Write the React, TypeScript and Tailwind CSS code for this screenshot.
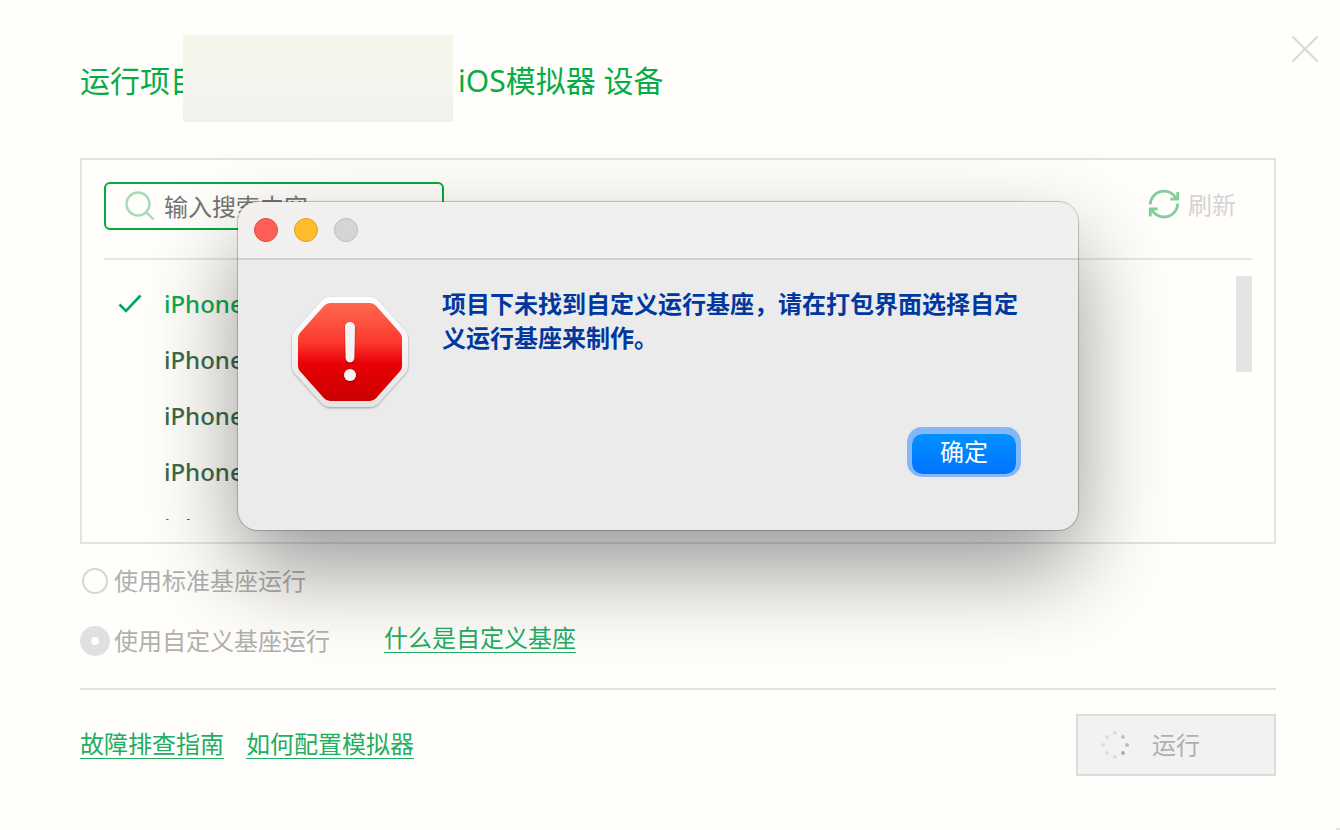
const devices = ["iPhone 8", "iPhone 8 Plus", "iPhone 11", "iPhone 11 Pro", "iPhone 12"];

const spinnerDots = [
  { cx: 15, cy: 3, fill: "#dcdcdc" },
  { cx: 23, cy: 7, fill: "#c3c3c3" },
  { cx: 27, cy: 15, fill: "#bdbdbd" },
  { cx: 23, cy: 23, fill: "#b0b0b0" },
  { cx: 15, cy: 27, fill: "#dcdcdc" },
  { cx: 7, cy: 23, fill: "#dedede" },
  { cx: 3, cy: 15, fill: "#dedede" },
  { cx: 7, cy: 7, fill: "#dedede" },
];

function Header() {
  return (
    <header className="flex items-start justify-between pt-[35px] pl-20 pr-[22px]">
      <h1 className="flex items-center text-[30px] leading-9 text-[#08ac46]">
        <span className="pt-1">运行项目</span>
        <span className="relative -ml-[17px] mr-[5px] h-[87px] w-[270px] bg-linear-to-b from-[#f6f7e9] via-[#f4f5ef] to-[#f1f2ed]" />
        <span className="pt-1">iOS模拟器 设备</span>
      </h1>
      <button type="button" aria-label="关闭" className="mt-px">
        <svg width="26" height="26" viewBox="0 0 26 26" stroke="#d8d8d8" strokeWidth="2">
          <path d="M0.500 0.500 25.500 25.500M25.500 0.500 0.500 25.500" />
        </svg>
      </button>
    </header>
  );
}

function SearchBar() {
  return (
    <div className="flex items-center justify-between">
      <label className="flex h-12 w-[340px] items-center gap-2 rounded-md border-2 border-[#00ad3a] pl-[18px]">
        <svg width="32" height="32" viewBox="0 0 32 32" fill="none" stroke="#a3dcb6" strokeWidth="2.400" className="shrink-0">
          <circle cx="14" cy="14" r="11.500" />
          <path d="M22 22 29.500 29.500" />
        </svg>
        <input
          type="text"
          aria-label="搜索"
          placeholder="输入搜索内容"
          className="w-full bg-transparent pt-0.5 text-2xl outline-none placeholder:text-[#757575]"
        />
      </label>
      <button type="button" className="mr-4 mb-1 flex items-center gap-2 text-2xl text-[#d4d4d4]">
        <svg width="32" height="32" viewBox="0 0 32 32" fill="none" stroke="#82cf98" strokeWidth="2.800">
          <path d="M2.300 16.500A13.700 13.700 0 0 1 28.500 11.200" />
          <path d="M29.700 4V11.200H22.300" />
          <path d="M29.700 15.500A13.700 13.700 0 0 1 3.500 20.900" />
          <path d="M2.300 28.500V20.900H9.700" />
        </svg>
        <span className="pt-0.5">刷新</span>
      </button>
    </div>
  );
}

function DeviceList() {
  return (
    <div className="mt-4 flex h-[244px] items-start overflow-hidden">
      <ul className="flex-1 text-2xl font-medium">
        {devices.map((name, index) => (
          <li
            key={name}
            className={
              index === 0
                ? "flex h-14 items-center text-[#12a94d]"
                : "flex h-14 items-center text-[#3c6a48]"
            }
          >
            <span className="flex w-[60px] pl-[14px]">
              {index === 0 && (
                <svg width="24" height="20" viewBox="0 0 24 20" fill="none" stroke="#00a85a" strokeWidth="2.600">
                  <path d="M1.500 10.500 8 17 22.500 1.500" />
                </svg>
              )}
            </span>
            {name}
          </li>
        ))}
      </ul>
      <div className="h-24 w-4 bg-[#e4e4e4]" />
    </div>
  );
}

function RunOptions() {
  return (
    <div className="mt-[7px] text-2xl text-[#b0b0b0]">
      <div className="flex h-15 items-center">
        <label className="flex items-center gap-1">
          <span className="flex w-[30px] justify-center">
            <input
              type="radio"
              name="base"
              className="size-[26px] appearance-none rounded-full border-2 border-[#d6d6d6] bg-[#fffefb]"
            />
          </span>
          使用标准基座运行
        </label>
      </div>
      <div className="flex h-15 items-center">
        <label className="flex items-center gap-1">
          <input
            type="radio"
            name="base"
            defaultChecked
            className="size-[30px] appearance-none rounded-full border-[11px] border-[#e0e0e0] bg-[#fffefb]"
          />
          使用自定义基座运行
        </label>
        <a href="#custom-base" className="mb-1.5 ml-[54px] border-b border-[#21ae62] leading-7 text-[#21ae62]">
          什么是自定义基座
        </a>
      </div>
    </div>
  );
}

function Footer() {
  return (
    <footer className="mt-[17px] flex items-center justify-between border-t-2 border-[#e3e3e5] pt-6 text-2xl">
      <nav className="mb-0.5 flex gap-[22px] text-[#21ae62]">
        <a href="#troubleshooting" className="border-b border-[#21ae62] leading-7">
          故障排查指南
        </a>
        <a href="#simulator" className="border-b border-[#21ae62] leading-7">
          如何配置模拟器
        </a>
      </nav>
      <button
        type="button"
        className="flex h-[62px] w-[200px] items-center gap-[22px] border-2 border-[#dcdcdc] bg-[#f2f2f2] pl-[22px] text-[#b0b0b0]"
      >
        <svg width="30" height="30" viewBox="0 0 30 30">
          {spinnerDots.map((dot) => (
            <circle key={`${dot.cx}-${dot.cy}`} cx={dot.cx} cy={dot.cy} r="2" fill={dot.fill} />
          ))}
        </svg>
        运行
      </button>
    </footer>
  );
}

function StopIcon() {
  return (
    <svg width="120" height="120" viewBox="20 15 120 120" className="shrink-0">
      <defs>
        <linearGradient id="stop-red" gradientUnits="userSpaceOnUse" x1="0" y1="23" x2="0" y2="121">
          <stop offset="0" stopColor="#ff6850" />
          <stop offset="0.400" stopColor="#fb3a2c" />
          <stop offset="0.620" stopColor="#e80006" />
          <stop offset="1" stopColor="#cb0000" />
        </linearGradient>
        <linearGradient id="stop-rim" gradientUnits="userSpaceOnUse" x1="0" y1="17" x2="0" y2="127">
          <stop offset="0" stopColor="#ffffff" />
          <stop offset="1" stopColor="#e4e4e4" />
        </linearGradient>
        <filter id="stop-shadow" x="-20%" y="-20%" width="140%" height="140%">
          <feDropShadow dx="0" dy="1" stdDeviation="1.200" floodOpacity="0.350" />
        </filter>
      </defs>
      <polygon
        points="61,30 99,30 125,59 125,85 99,114 61,114 35,85 35,59"
        fill="url(#stop-rim)"
        stroke="url(#stop-rim)"
        strokeWidth="26"
        strokeLinejoin="round"
        filter="url(#stop-shadow)"
      />
      <polygon
        points="60,31 100,31 124,58 124,86 100,113 60,113 36,86 36,58"
        fill="url(#stop-red)"
        stroke="url(#stop-red)"
        strokeWidth="16"
        strokeLinejoin="round"
      />
      <g fill="#f3f3f3" filter="url(#stop-shadow)">
        <path d="M75 47a5 5 0 0 1 10 0L84.300 78a4.300 4.300 0 0 1-8.600 0Z" />
        <circle cx="80" cy="95" r="6" />
      </g>
    </svg>
  );
}

function AlertDialog() {
  return (
    <div
      role="alertdialog"
      aria-describedby="alert-message"
      className="absolute top-[202px] left-[238px] w-[840px] overflow-hidden rounded-[20px] bg-[#ebebeb] shadow-[0_0_1px_1px_rgba(0,0,0,0.22),0_40px_90px_rgba(0,0,0,0.4)]"
    >
      <div className="flex h-[58px] items-center gap-4 border-b-2 border-[#cfcfcf] bg-[#f1f0ef] px-4">
        <button type="button" aria-label="关闭窗口" className="size-6 rounded-full border border-[#e2463f] bg-[#ff5f57]" />
        <button type="button" aria-label="最小化" className="size-6 rounded-full border border-[#e0a023] bg-[#febc2e]" />
        <button type="button" aria-label="缩放" disabled className="size-6 rounded-full border border-[#bcbcbb] bg-[#d6d5d4]" />
      </div>
      <div className="flex items-start gap-8 pt-[27px] pr-[58px] pb-14 pl-[52px]">
        <div className="pt-2">
          <StopIcon />
        </div>
        <div className="flex flex-1 flex-col items-end gap-[79px]">
          <p id="alert-message" className="w-full text-2xl leading-[34px] font-bold text-[#0038a0]">
            项目下未找到自定义运行基座，请在打包界面选择自定义运行基座来制作。
          </p>
          <button
            type="button"
            className="mr-1 h-10 w-[104px] rounded-[10px] bg-linear-to-b from-[#0091ff] to-[#0073ff] pb-1 text-2xl leading-8 text-white shadow-[0_-2px_0_5px_#83b8f5]"
          >
            确定
          </button>
        </div>
      </div>
    </div>
  );
}

export default function App() {
  return (
    <div className="relative min-h-screen overflow-hidden bg-[#fffefb] pb-[54px] font-['Noto_Sans','Noto_Sans_CJK_SC',sans-serif]">
      <Header />
      <main className="mt-9 pr-16 pl-20">
        <section className="border-2 border-[#e3e3e5] p-[22px]">
          <SearchBar />
          <div className="mt-7 border-b-2 border-[#e6e6e6]" />
          <DeviceList />
        </section>
        <RunOptions />
        <Footer />
      </main>
      <AlertDialog />
      <div className="absolute right-0 bottom-0 h-0.5 w-1 bg-[#e3e3e5]" />
    </div>
  );
}
